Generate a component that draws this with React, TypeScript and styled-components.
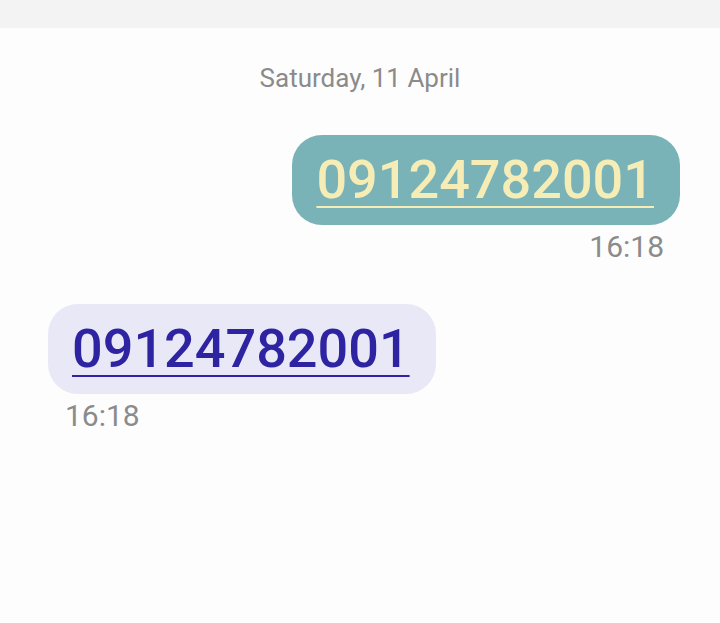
import styled, { createGlobalStyle } from 'styled-components';

const Global = createGlobalStyle`
    html, body {
        margin: 0;
        padding: 0;
        background: #fdfdfe;
        font-family: Roboto, "Noto Sans", sans-serif;
    }
`;

const Page = styled.div`
    display: flex;
    flex-direction: column;
    min-height: 623px;
`;

const TopBar = styled.div`
    height: 28px;
    background: #f3f3f3;
`;

const DateLabel = styled.div`
    text-align: center;
    color: #8b8b8b;
    font-size: 26px;
    margin-top: 33px;
    line-height: 34px;
`;

const Thread = styled.div`
    display: flex;
    flex-direction: column;
    padding: 0 40px 0 48px;
`;

const Row = styled.div<{ $mine?: boolean }>`
    display: flex;
    flex-direction: column;
    align-items: ${(p) => (p.$mine ? 'flex-end' : 'flex-start')};
    margin-top: ${(p) => (p.$mine ? '40px' : '35px')};
`;

const Bubble = styled.div<{ $mine?: boolean }>`
    height: 90px;
    box-sizing: border-box;
    padding: 0 26px 0 24px;
    display: flex;
    align-items: center;
    border-radius: 30px;
    background: ${(p) => (p.$mine ? '#79b3b8' : '#e8e8f6')};
`;

const Number = styled.a<{ $mine?: boolean }>`
    font-size: 54px;
    font-weight: 500;
    line-height: 60px;
    color: ${(p) => (p.$mine ? '#f6edb6' : '#2e24a2')};
    text-decoration: underline;
    text-decoration-thickness: 2px;
    text-underline-offset: 8px;
`;

const Time = styled.div<{ $mine?: boolean }>`
    font-size: 30px;
    line-height: 44px;
    color: #8b8b8b;
    padding: 0 16px 0 17px;
`;

export default function App() {
    return (
        <>
            <Global />
            <Page>
                <TopBar />
                <DateLabel>Saturday, 11 April</DateLabel>
                <Thread>
                    <Row $mine>
                        <Bubble $mine>
                            <Number $mine href="#">09124782001</Number>
                        </Bubble>
                        <Time $mine>16:18</Time>
                    </Row>
                    <Row>
                        <Bubble>
                            <Number href="#">09124782001</Number>
                        </Bubble>
                        <Time>16:18</Time>
                    </Row>
                </Thread>
            </Page>
        </>
    );
}
